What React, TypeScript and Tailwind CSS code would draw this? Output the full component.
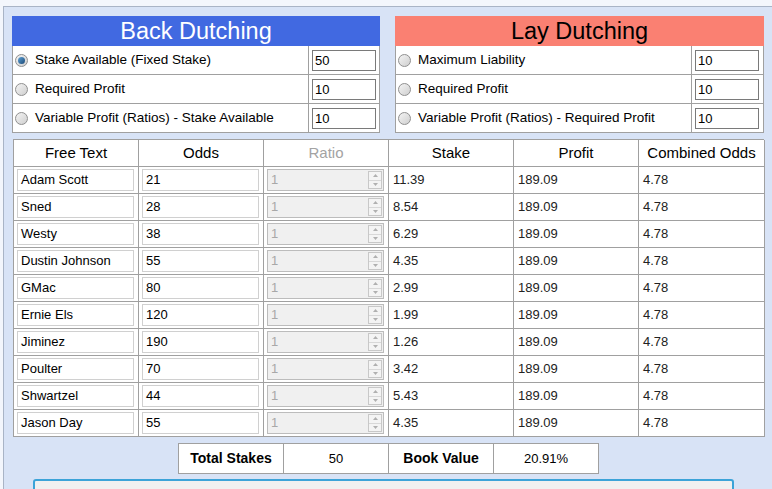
import React from "react";

const rows = [
  ["Adam Scott", "21", "11.39"],
  ["Sned", "28", "8.54"],
  ["Westy", "38", "6.29"],
  ["Dustin Johnson", "55", "4.35"],
  ["GMac", "80", "2.99"],
  ["Ernie Els", "120", "1.99"],
  ["Jiminez", "190", "1.26"],
  ["Poulter", "70", "3.42"],
  ["Shwartzel", "44", "5.43"],
  ["Jason Day", "55", "4.35"],
];

function Radio({ checked }: { checked?: boolean }) {
  return (
    <div className="w-[13px] h-[13px] rounded-full border border-[#8f8f8f] bg-gradient-to-br from-[#f4f4f4] to-[#cfcfcf] flex items-center justify-center shrink-0">
      {checked && <div className="w-[7px] h-[7px] rounded-full bg-gradient-to-br from-[#5fa3d6] to-[#1d4a78]" />}
    </div>
  );
}

function OptRow({ label, value, checked, last }: { label: string; value: string; checked?: boolean; last?: boolean }) {
  return (
    <div className={`grid grid-cols-[296px_1fr] ${last ? "h-[28px]" : "h-[29px] border-b border-[#a0a0a0]"}`}>
      <div className="flex items-center pl-[2px] gap-[7px] border-r border-[#a0a0a0]">
        <Radio checked={checked} />
        <span className="text-[13.5px] text-black">{label}</span>
      </div>
      <div className="flex items-center pl-[3px]">
        <div className="w-[64px] h-[21px] border border-[#7a7a7a] bg-white text-[13px] pl-[2px] leading-[19px]">{value}</div>
      </div>
    </div>
  );
}

function Spinner() {
  return (
    <div className="w-[14px] h-[18px] border border-[#c8c8c8] bg-[#f4f4f4] flex flex-col">
      <div className="flex-1 flex items-center justify-center border-b border-[#d8d8d8]">
        <svg width="5" height="3" viewBox="0 0 5 3"><path d="M0 3 L2.5 0 L5 3Z" fill="#b0b0b0" /></svg>
      </div>
      <div className="flex-1 flex items-center justify-center">
        <svg width="5" height="3" viewBox="0 0 5 3"><path d="M0 0 L2.5 3 L5 0Z" fill="#b0b0b0" /></svg>
      </div>
    </div>
  );
}

export default function App() {
  const cell = "border-r border-b border-[#a0a0a0] h-[27px]";
  return (
    <div className="w-[772px] h-[489px] overflow-hidden bg-[#f3f6fc] pt-[6px] pl-[3px]" style={{ fontFamily: "'Liberation Sans', Arial, sans-serif" }}>
      <div className="h-full border-t border-l border-[#a9b4c6] bg-[#d8e3f6] pt-[9px] pl-[8px]">
        <div className="flex gap-[15px]">
          <div className="w-[368px]">
            <div className="h-[30px] bg-[#4169e1] text-white text-[23.5px] leading-[31px] text-center">Back Dutching</div>
            <div className="bg-white border-l border-r border-b border-[#a0a0a0]">
              <OptRow label="Stake Available (Fixed Stake)" value="50" checked />
              <OptRow label="Required Profit" value="10" />
              <OptRow label="Variable Profit (Ratios) - Stake Available" value="10" last />
            </div>
          </div>
          <div className="w-[369px]">
            <div className="h-[30px] bg-[#fa8072] text-black text-[23.5px] leading-[31px] text-center">Lay Dutching</div>
            <div className="bg-white border-l border-r border-b border-[#a0a0a0]">
              <OptRow label="Maximum Liability" value="10" />
              <OptRow label="Required Profit" value="10" />
              <OptRow label="Variable Profit (Ratios) - Required Profit" value="10" last />
            </div>
          </div>
        </div>

        <div className="ml-[1px] mt-[6px] w-[751px] bg-white border-l border-t border-[#a0a0a0] grid grid-cols-[125px_125px_125px_125px_125px_126px]">
          <div className={`${cell} flex items-center justify-center text-[15px]`}>Free Text</div>
          <div className={`${cell} flex items-center justify-center text-[15px]`}>Odds</div>
          <div className={`${cell} flex items-center justify-center text-[15px] text-[#a3a3a3]`}>Ratio</div>
          <div className={`${cell} flex items-center justify-center text-[15px]`}>Stake</div>
          <div className={`${cell} flex items-center justify-center text-[15px]`}>Profit</div>
          <div className={`${cell} flex items-center justify-center text-[15px]`}>Combined Odds</div>
          {rows.map(([name, odds, stake]) => (
            <React.Fragment key={name}>
              <div className={`${cell} pl-[3px] pt-[2px]`}>
                <div className="w-[117px] h-[22px] border border-[#d0d0d0] text-[13px] leading-[20px] pl-[3px]">{name}</div>
              </div>
              <div className={`${cell} pl-[3px] pt-[2px]`}>
                <div className="w-[117px] h-[22px] border border-[#d0d0d0] text-[13px] leading-[20px] pl-[3px]">{odds}</div>
              </div>
              <div className={`${cell} pl-[3px] pt-[2px]`}>
                <div className="w-[117px] h-[22px] border border-[#bcbcbc] bg-[#f0f0f0] flex items-center justify-between pl-[3px] pr-[1px]">
                  <span className="text-[13px] text-[#a8a8a8]">1</span>
                  <Spinner />
                </div>
              </div>
              <div className={`${cell} flex items-center pl-[4px] text-[13px] text-[#222]`}>{stake}</div>
              <div className={`${cell} flex items-center pl-[4px] text-[13px] text-[#222]`}>189.09</div>
              <div className={`${cell} flex items-center pl-[4px] text-[13px] text-[#222]`}>4.78</div>
            </React.Fragment>
          ))}
        </div>

        <div className="mt-[6px] flex justify-center w-[753px]">
          <div className="flex h-[31px] bg-white border border-[#a0a0a0]">
            <div className="w-[105px] flex items-center justify-center border-r border-[#a0a0a0] text-[14px] font-bold">Total Stakes</div>
            <div className="w-[105px] flex items-center justify-center border-r border-[#a0a0a0] text-[13px]">50</div>
            <div className="w-[105px] flex items-center justify-center border-r border-[#a0a0a0] text-[14px] font-bold">Book Value</div>
            <div className="w-[104px] flex items-center justify-center text-[13px]">20.91%</div>
          </div>
        </div>

        <div className="mt-[5px] ml-[21px] w-[701px] h-[40px] border-2 border-[#3ca3d8] rounded-t-[3px] bg-[#f0f0f0]" />
      </div>
    </div>
  );
}
